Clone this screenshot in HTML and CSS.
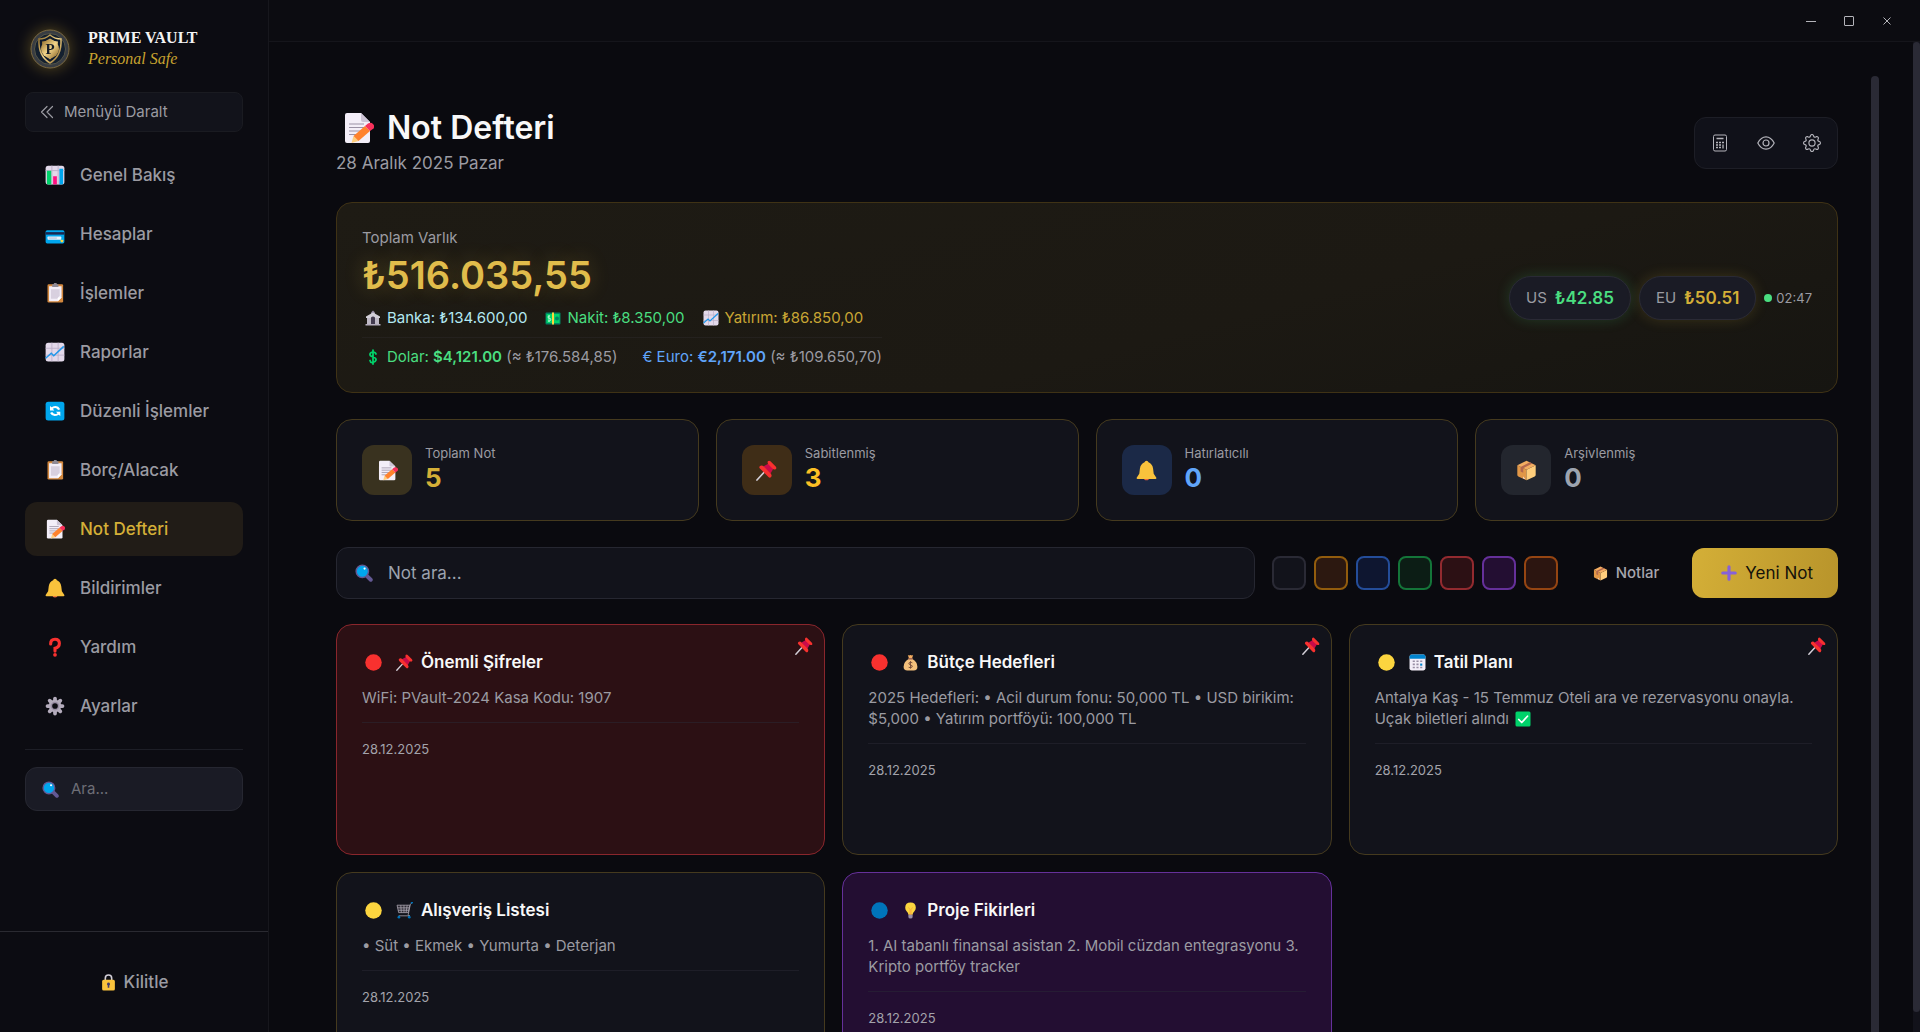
FILE: index.html
```html
<!DOCTYPE html>
<html lang="tr">
<head>
<meta charset="utf-8">
<meta name="viewport" content="width=device-width, initial-scale=1">
<title>Prime Vault – Not Defteri</title>
<link rel="stylesheet" href="styles.css">
</head>
<body>
<svg class="sprite" aria-hidden="true">
  <symbol id="i-bars" viewBox="0 0 32 32"><rect x="1" y="1" width="30" height="30" rx="4" fill="#e3d9ea"/><path d="M11 1v30M21 1v30M1 9h30" stroke="#c0b3cb" stroke-width="1.6"/><path d="M3 9h7v22H5a2 2 0 0 1-2-2z" fill="#00d26a"/><path d="M13 18h6v13h-6z" fill="#ff0f80"/><path d="M23 6h6v23a2 2 0 0 1-2 2h-4z" fill="#00a6ed"/></symbol>
  <symbol id="i-card" viewBox="0 0 32 32"><rect x="1" y="10" width="30" height="21" rx="2.5" fill="#00a6ed"/><path d="M1 13h30v4H1z" fill="#1b2750"/><rect x="4" y="20" width="22" height="5" rx="1" fill="#e8f2fb"/><path d="M6 22.500h13" stroke="#8a9cc0"/><rect x="25" y="25" width="4" height="4" rx="1" fill="#fcd53f"/></symbol>
  <symbol id="i-clip" viewBox="0 0 32 32"><rect x="4" y="2" width="25" height="29" rx="2" fill="#d3883e"/><path d="M6.500 5h20v18l-6 6h-14z" fill="#f3eef8"/><path d="M9.500 10h14v10l-4 5h-10z" fill="#d8d0df"/><path d="M20.500 29v-5q0-1 1-1h5z" fill="#fff"/><path d="M14 2a2.500 2.500 0 0 1 5 0h2.500v4.500h-10V2z" fill="#8f8a95"/></symbol>
  <symbol id="i-chart" viewBox="0 0 32 32"><rect x="1" y="1" width="30" height="30" rx="4" fill="#e3d9ea"/><path d="M11 1v30M21 1v30M1 10h30M1 21h30" stroke="#bdb0c9" stroke-width="1.400"/><path d="M1 26l9-8 4 4L30 7" fill="none" stroke="#1f97ea" stroke-width="2.400"/></symbol>
  <symbol id="i-sync" viewBox="0 0 32 32"><rect x="1" y="1" width="30" height="30" rx="4" fill="#00a6ed"/><path d="M8 8v7h7l-2.500-2.500q5-3.500 8.500 2l3.500-1.500Q20 5 10.500 10zM24.500 24v-7h-7l2.500 2.500q-5 3.500-8.500-2L8 19q4.500 8 14 3z" fill="#fff"/></symbol>
  <symbol id="i-memo" viewBox="0 0 32 32"><path d="M5 1h14l9 9v19a2 2 0 0 1-2 2H5a2 2 0 0 1-2-2V3a2 2 0 0 1 2-2z" fill="#f3eef8"/><path d="M19 1l9 9h-7a2 2 0 0 1-2-2z" fill="#cdc4d6"/><path d="M7 12h15M7 15.500h15M7 19h12M7 22.500h8" stroke="#9b92a6" stroke-width="1.200"/><path d="M9.500 31l2-7 5 5z" fill="#ffce7c"/><path d="M11.500 24L23 14l5 5-11.500 10z" fill="#ff822d"/><path d="M23 14l3-2.500q3-1.500 5 .5t.5 4.500L28 19z" fill="#f8315b"/></symbol>
  <symbol id="i-bell" viewBox="0 0 32 32"><path d="M12 27h8a4 4 0 0 1-8 0z" fill="#e8613c"/><path d="M16 1q2.500 0 3 2.500Q25 6 26 13l1 8 4 6q.5 2-1.500 2h-27Q.500 29 1 27l4-6 1-8Q7 6 13 3.500 13.500 1 16 1z" fill="#f9c23c"/></symbol>
  <symbol id="i-question" viewBox="0 0 32 32"><path d="M9 11q0-7.500 7-7.500t7 6.500-7 8v4.500" fill="none" stroke="#f8312f" stroke-width="5" stroke-linecap="round"/><circle cx="16" cy="28.500" r="3" fill="#f8312f"/></symbol>
  <symbol id="i-cog" viewBox="0 0 32 32"><g stroke="#b4acbc" stroke-width="6" stroke-linecap="round"><path d="M16 4v24M4 16h24M7.500 7.500l17 17M24.500 7.500l-17 17"/></g><circle cx="16" cy="16" r="10" fill="#b4acbc"/><circle cx="16" cy="16" r="7" fill="#998ea4"/><circle cx="16" cy="16" r="4.500" fill="#0c0c12"/></symbol>
  <symbol id="i-search" viewBox="0 0 32 32"><path d="M21 21l7 7" stroke="#635994" stroke-width="7" stroke-linecap="round"/><circle cx="13" cy="13" r="11" fill="#00a6ed" stroke="#635994" stroke-width="2.500"/><circle cx="17" cy="8" r="2" fill="#fff"/></symbol>
  <symbol id="i-lock" viewBox="0 0 32 32"><path d="M10 13V8q0-6 6-6t6 6v5" fill="none" stroke="#d3cfd8" stroke-width="3"/><rect x="4" y="11" width="24" height="20" rx="3" fill="#f9c23c"/><path d="M16 16a3 3 0 0 1 1.500 5.500V26h-3v-4.500A3 3 0 0 1 16 16z" fill="#433b6b"/></symbol>
  <symbol id="i-bank" viewBox="0 0 32 32"><path d="M16 1l4 4v4h-8V5z" fill="#998ea4"/><path d="M2 13L16 5l14 8v3H2z" fill="#d3cfd8"/><path d="M4 16h24v12H4z" fill="#9b93a3"/><path d="M12 15q4-4 8 0v13h-8z" fill="#433b4f"/><path d="M6 16v12M10 16v12M22 16v12M26 16v12" stroke="#e1dde6" stroke-width="2"/><path d="M1 28h30v3H1z" fill="#b4acbc"/></symbol>
  <symbol id="i-cash" viewBox="0 0 32 32"><rect x="1" y="5" width="30" height="24" rx="2" fill="#008463"/><rect x="3" y="8" width="26" height="18" fill="#00d26a"/><circle cx="24" cy="17" r="4" fill="#008463"/><path d="M14 5h4v24h-4z" fill="#fcd53f"/><path d="M10 12q-4-1-4 2t4 3 0 5H6M8 10v14" fill="none" stroke="#d5fbe5" stroke-width="1.500"/></symbol>
  <symbol id="i-dollar" viewBox="0 0 32 32"><path d="M22 10q-1-4-6-4t-6 4 6 6 6 6-6 5-6-4M16 2v28" fill="none" stroke="#00d26a" stroke-width="3.500" stroke-linecap="round"/></symbol>
  <symbol id="i-pin" viewBox="0 0 32 32"><path d="M1.500 30.500L12 19" stroke="#d3cfd8" stroke-width="2.600" stroke-linecap="round"/><path d="M11 10l9-5 7 7-5 9z" fill="#ca0b4a"/><path d="M6 9q3-2 6 1l10 10q3 3 1 6-2 2-4 0L6 13q-2-2 0-4zM18 2q2-2 4 0l8 8q2 2 0 4-3 1-5-1l-6-6q-2-2-1-5z" fill="#f8312f"/></symbol>
  <symbol id="i-box" viewBox="0 0 32 32"><path d="M2 8l14 7v16L3.500 25Q2 24 2 23z" fill="#e19747"/><path d="M30 8l-14 7v16l12.500-6q1.500-1 1.500-2z" fill="#ffce7c"/><path d="M2 8l14-7 14 7-14 7z" fill="#f3ad61"/><path d="M25 5.500L21 3.500l-14 7v7l4 2v-7z" fill="#b3684d"/><path d="M11 25l3 4-3-1z" fill="#f3eef8"/></symbol>
  <symbol id="i-plus" viewBox="0 0 32 32"><path d="M16 6v20M6 16h20" stroke="#8661d9" stroke-width="5" stroke-linecap="round"/></symbol>
  <symbol id="i-dot" viewBox="0 0 32 32"><circle cx="16" cy="16" r="15.500" fill="currentColor"/></symbol>
  <symbol id="i-bag" viewBox="0 0 32 32"><path d="M11 2q2 1.500 5 0 3 1.500 5 0l-2 6h-6z" fill="#f3ad61"/><path d="M13 9h6q10 6 10 15 0 7-7 7H10q-7 0-7-7 0-9 10-15z" fill="#f3c07b"/><path d="M12 7.500h8v3h-8z" fill="#a56953"/><path d="M19.500 16.500q-3.500-2.500-6 0t2.500 4 3 4-6.500.500M16 13.500v14" fill="none" stroke="#6d4534" stroke-width="1.600"/></symbol>
  <symbol id="i-calendar" viewBox="0 0 32 32"><rect x="1" y="1" width="30" height="30" rx="4" fill="#f3eef8"/><path d="M1 9V5a4 4 0 0 1 4-4h22a4 4 0 0 1 4 4v4z" fill="#0084ce"/><g fill="#998ea4"><path d="M7 12h4v3H7zM14 12h4v3h-4zM21 12h4v3h-4zM7 18h4v3H7zM14 18h4v3h-4zM7 24h4v3H7zM14 24h4v3h-4zM21 24h4v3h-4z"/></g><path d="M21 18h4v4h-4z" fill="#0084ce"/></symbol>
  <symbol id="i-check" viewBox="0 0 32 32"><rect x="1" y="1" width="30" height="30" rx="3" fill="#00d26a"/><path d="M7.500 17l6 6L25 10.500" fill="none" stroke="#fff" stroke-width="3.400" stroke-linecap="round" stroke-linejoin="round"/></symbol>
  <symbol id="i-cart" viewBox="0 0 32 32"><path d="M2 6h24l-3 14H5z" fill="#2d2a33"/><path d="M2 6h24l-3 14H5zM3 11h22M4 15.500h20M9 6l1 14M15 6v14M21 6l-2 14M30 2l-3 2-4 20q0 2 3 2H5" fill="none" stroke="#a9a4b0" stroke-width="1.500"/><path d="M28 2l4-1" stroke="#0074ba" stroke-width="3"/><circle cx="5.500" cy="28.500" r="2.500" fill="#0074ba"/><circle cx="25" cy="28.500" r="2.500" fill="#0074ba"/></symbol>
  <symbol id="i-bulb" viewBox="0 0 32 32"><path d="M16 1q10 0 10 10 0 4-3 7t-3 6h-8q0-3-3-6t-3-7Q6 1 16 1z" fill="#fcd53f"/><path d="M12 10l3 4v10h2V14l3-4" fill="none" stroke="#f9a03c" stroke-width="1.400"/><path d="M12 24h8v4q0 3-4 3t-4-3z" fill="#998ea4"/></symbol>
</svg>

<aside class="sidebar">
  <div class="brand">
    <svg class="brand-logo" viewBox="0 0 40 40" role="img" aria-label="Prime Vault">
      <defs><linearGradient id="gold" x1="0" y1="0" x2="1" y2="1"><stop offset="0" stop-color="#8d6a28"/><stop offset=".5" stop-color="#f3d58a"/><stop offset="1" stop-color="#8a6424"/></linearGradient></defs>
      <circle cx="20" cy="20" r="19" fill="#383c42" stroke="#7d6b43"/>
      <circle cx="20" cy="20" r="15.500" fill="#14202f" stroke="#575648"/>
      <path d="M20 6q5 4 11 4 1 17-11 24Q8 27 9 10q6 0 11-4z" fill="#101b2b" stroke="url(#gold)" stroke-width="1.500"/>
      <path d="M20 9.500q4 3 8 3 0 13-8 18-8-5-8-18 4 0 8-3z" fill="url(#gold)"/>
      <circle cx="20" cy="20" r="9" fill="url(#gold)"/>
      <text x="20" y="25" text-anchor="middle" class="logo-letter">P</text>
    </svg>
    <div>
      <div class="brand-name">PRIME VAULT</div>
      <div class="brand-sub">Personal Safe</div>
    </div>
  </div>

  <button class="collapse" type="button">
    <svg viewBox="0 0 14 14" fill="none" stroke="currentColor" stroke-width="1.200" stroke-linecap="round" stroke-linejoin="round"><path d="M7 1.500L1.500 7 7 12.500M12.500 1.500L7 7l5.500 5.500"/></svg>
    Menüyü Daralt
  </button>

  <nav class="nav">
    <a href="#"><svg><use href="#i-bars"/></svg>Genel Bakış</a>
    <a href="#"><svg><use href="#i-card"/></svg>Hesaplar</a>
    <a href="#"><svg><use href="#i-clip"/></svg>İşlemler</a>
    <a href="#"><svg><use href="#i-chart"/></svg>Raporlar</a>
    <a href="#"><svg><use href="#i-sync"/></svg>Düzenli İşlemler</a>
    <a href="#"><svg><use href="#i-clip"/></svg>Borç/Alacak</a>
    <a href="#" class="active" aria-current="page"><svg><use href="#i-memo"/></svg>Not Defteri</a>
    <a href="#"><svg><use href="#i-bell"/></svg>Bildirimler</a>
    <a href="#"><svg><use href="#i-question"/></svg>Yardım</a>
    <a href="#"><svg><use href="#i-cog"/></svg>Ayarlar</a>
  </nav>

  <div class="side-search-wrap">
    <label class="side-search">
      <svg aria-hidden="true"><use href="#i-search"/></svg>
      <input type="search" placeholder="Ara..." aria-label="Ara">
    </label>
  </div>

  <div class="side-footer">
    <button class="lock" type="button"><svg><use href="#i-lock"/></svg>Kilitle</button>
  </div>
</aside>

<div class="frame">
  <header class="titlebar">
    <button type="button" aria-label="Küçült"><svg viewBox="0 0 12 12"><path d="M1 6.500h10"/></svg></button>
    <button type="button" aria-label="Büyüt"><svg viewBox="0 0 12 12"><rect x="1.500" y="1.500" width="9" height="9" rx=".5"/></svg></button>
    <button type="button" aria-label="Kapat"><svg viewBox="0 0 12 12"><path d="M2.500 2.500l7 7M9.500 2.500l-7 7"/></svg></button>
  </header>

  <div class="outer">
    <div class="outer-view">
      <main class="page">
        <div class="page-head">
          <div>
            <h1><svg><use href="#i-memo"/></svg>Not Defteri</h1>
            <p class="date">28 Aralık 2025 Pazar</p>
          </div>
          <div class="tools">
            <button type="button" aria-label="Hesap makinesi"><svg viewBox="0 0 18 18" fill="none" stroke="currentColor"><rect x="2.500" y="1" width="13" height="16" rx="1.500"/><path d="M5.500 4.500h7" stroke-width="1.500"/><path d="M5 8.500h2M8 8.500h2M11 8.500h2M5 11h2M8 11h2M5 13.500h2M8 13.500h2M12 10.500v4" stroke-width="1.300"/></svg></button>
            <button type="button" aria-label="Gizle"><svg viewBox="0 0 18 18" fill="none" stroke="currentColor" stroke-width="1.200"><path d="M.8 9Q4 2.800 9 2.800T17.200 9Q14 15.200 9 15.200T.8 9z" stroke-linejoin="round"/><circle cx="9" cy="9" r="3"/></svg></button>
            <button type="button" aria-label="Ayarlar"><svg viewBox="0 0 16 16" fill="currentColor"><path d="M8 4.754a3.246 3.246 0 1 0 0 6.492 3.246 3.246 0 0 0 0-6.492zM5.754 8a2.246 2.246 0 1 1 4.492 0 2.246 2.246 0 0 1-4.492 0z"/><path d="M9.796 1.343c-.527-1.790-3.065-1.790-3.592 0l-.094.319a.873.873 0 0 1-1.255.52l-.292-.16c-1.640-.892-3.433.902-2.540 2.541l.159.292a.873.873 0 0 1-.52 1.255l-.319.094c-1.790.527-1.790 3.065 0 3.592l.319.094a.873.873 0 0 1 .52 1.255l-.16.292c-.892 1.640.901 3.434 2.541 2.540l.292-.159a.873.873 0 0 1 1.255.52l.094.319c.527 1.790 3.065 1.790 3.592 0l.094-.319a.873.873 0 0 1 1.255-.52l.292.16c1.640.893 3.434-.902 2.540-2.541l-.159-.292a.873.873 0 0 1 .52-1.255l.319-.094c1.790-.527 1.790-3.065 0-3.592l-.319-.094a.873.873 0 0 1-.52-1.255l.16-.292c.893-1.640-.902-3.433-2.541-2.540l-.292.159a.873.873 0 0 1-1.255-.52l-.094-.319zm-2.633.283c.246-.835 1.428-.835 1.674 0l.094.319a1.873 1.873 0 0 0 2.693 1.115l.291-.16c.764-.415 1.600.42 1.184 1.185l-.159.292a1.873 1.873 0 0 0 1.116 2.692l.318.094c.835.246.835 1.428 0 1.674l-.319.094a1.873 1.873 0 0 0-1.115 2.693l.16.291c.415.764-.42 1.600-1.185 1.184l-.291-.159a1.873 1.873 0 0 0-2.693 1.116l-.094.318c-.246.835-1.428.835-1.674 0l-.094-.319a1.873 1.873 0 0 0-2.692-1.115l-.292.16c-.764.415-1.600-.42-1.184-1.185l.159-.291A1.873 1.873 0 0 0 1.945 8.930l-.319-.094c-.835-.246-.835-1.428 0-1.674l.319-.094A1.873 1.873 0 0 0 3.060 4.377l-.16-.292c-.415-.764.42-1.600 1.185-1.184l.292.159a1.873 1.873 0 0 0 2.692-1.115l.094-.319z"/></svg></button>
          </div>
        </div>

        <section class="assets">
          <div class="assets-main">
            <div class="assets-label">Toplam Varlık</div>
            <div class="assets-total">₺516.035,55</div>
            <div class="assets-row">
              <span class="bank"><svg><use href="#i-bank"/></svg>Banka: ₺134.600,00</span>
              <span class="cash"><svg><use href="#i-cash"/></svg>Nakit: ₺8.350,00</span>
              <span class="invest"><svg><use href="#i-chart"/></svg>Yatırım: ₺86.850,00</span>
            </div>
            <div class="assets-row fx">
              <span class="usd"><svg><use href="#i-dollar"/></svg><span>Dolar: <b>$4,121.00</b> <small>(≈ ₺176.584,85)</small></span></span>
              <span class="eur"><span>€ Euro: <b>€2,171.00</b> <small>(≈ ₺109.650,70)</small></span></span>
            </div>
          </div>
          <div class="rates">
            <span class="rate rate-usd">US <b>₺42.85</b></span>
            <span class="rate rate-eur">EU <b>₺50.51</b></span>
            <span class="rate-time">02:47</span>
          </div>
        </section>

        <section class="stats">
          <div class="stat gold"><span class="stat-icon"><svg><use href="#i-memo"/></svg></span><div><div class="stat-label">Toplam Not</div><div class="stat-value">5</div></div></div>
          <div class="stat amber"><span class="stat-icon"><svg><use href="#i-pin"/></svg></span><div><div class="stat-label">Sabitlenmiş</div><div class="stat-value">3</div></div></div>
          <div class="stat blue"><span class="stat-icon"><svg><use href="#i-bell"/></svg></span><div><div class="stat-label">Hatırlatıcılı</div><div class="stat-value">0</div></div></div>
          <div class="stat gray"><span class="stat-icon"><svg><use href="#i-box"/></svg></span><div><div class="stat-label">Arşivlenmiş</div><div class="stat-value">0</div></div></div>
        </section>

        <div class="filters">
          <label class="note-search">
            <svg aria-hidden="true"><use href="#i-search"/></svg>
            <input type="search" placeholder="Not ara..." aria-label="Not ara">
          </label>
          <div class="swatches">
            <button type="button" class="sw sw-none" aria-label="Renksiz"></button>
            <button type="button" class="sw sw-yellow" aria-label="Sarı"></button>
            <button type="button" class="sw sw-blue" aria-label="Mavi"></button>
            <button type="button" class="sw sw-green" aria-label="Yeşil"></button>
            <button type="button" class="sw sw-red" aria-label="Kırmızı"></button>
            <button type="button" class="sw sw-purple" aria-label="Mor"></button>
            <button type="button" class="sw sw-orange" aria-label="Turuncu"></button>
          </div>
          <button type="button" class="archive"><svg><use href="#i-box"/></svg>Notlar</button>
          <button type="button" class="new-note"><svg><use href="#i-plus"/></svg>Yeni Not</button>
        </div>

        <section class="notes">
          <article class="note note-red">
            <svg class="note-pin"><use href="#i-pin"/></svg>
            <h2><svg class="prio high"><use href="#i-dot"/></svg><svg><use href="#i-pin"/></svg>Önemli Şifreler</h2>
            <p>WiFi: PVault-2024 Kasa Kodu: 1907</p>
            <time>28.12.2025</time>
          </article>
          <article class="note">
            <svg class="note-pin"><use href="#i-pin"/></svg>
            <h2><svg class="prio high"><use href="#i-dot"/></svg><svg><use href="#i-bag"/></svg>Bütçe Hedefleri</h2>
            <p>2025 Hedefleri: • Acil durum fonu: 50,000 TL • USD birikim: $5,000 • Yatırım portföyü: 100,000 TL</p>
            <time>28.12.2025</time>
          </article>
          <article class="note">
            <svg class="note-pin"><use href="#i-pin"/></svg>
            <h2><svg class="prio mid"><use href="#i-dot"/></svg><svg><use href="#i-calendar"/></svg>Tatil Planı</h2>
            <p>Antalya Kaş - 15 Temmuz Oteli ara ve rezervasyonu onayla. Uçak biletleri alındı <svg class="inline-icon"><use href="#i-check"/></svg></p>
            <time>28.12.2025</time>
          </article>
          <article class="note">
            <h2><svg class="prio mid"><use href="#i-dot"/></svg><svg><use href="#i-cart"/></svg>Alışveriş Listesi</h2>
            <p>• Süt • Ekmek • Yumurta • Deterjan</p>
            <time>28.12.2025</time>
          </article>
          <article class="note note-purple">
            <h2><svg class="prio low"><use href="#i-dot"/></svg><svg><use href="#i-bulb"/></svg>Proje Fikirleri</h2>
            <p>1. AI tabanlı finansal asistan 2. Mobil cüzdan entegrasyonu 3. Kripto portföy tracker</p>
            <time>28.12.2025</time>
          </article>
        </section>
      </main>
      <div class="bar bar-inner"></div>
    </div>
    <div class="bar bar-outer"><div class="thumb"></div></div>
  </div>
</div>
</body>
</html>
```
FILE: styles.css
```css
:root {
  --bg: #0a0a0f;
  --panel: #12131b;
  --side: #0c0c12;
  --raised: #1a1b25;
  --line: #1d1e26;
  --gold: #d4af37;
  --gold-line: #453a1e;
  --muted: #9b9ba2;
  --text: #f8f8f8;
  --radius: 16px;
}

* { box-sizing: border-box; }

body {
  margin: 0;
  display: flex;
  height: 100vh;
  overflow: hidden;
  background: var(--bg);
  color: var(--text);
  font: 16px/20px Inter, "Noto Sans", sans-serif;
}

button, input { font: inherit; color: inherit; }
button { border: 0; background: none; padding: 0; cursor: pointer; }
h1, h2, p { margin: 0; }
svg { display: block; flex: none; }
.sprite { position: absolute; width: 0; height: 0; }

/* Sidebar */
.sidebar {
  flex: none;
  width: 269px;
  display: flex;
  flex-direction: column;
  background: var(--side);
  border-right: 1px solid #17171d;
  color: var(--muted);
}

.brand {
  display: flex;
  align-items: center;
  gap: 18px;
  padding: 28px 25px 22px 30px;
}
.brand-logo {
  width: 40px;
  height: 42px;
  border-radius: 50%;
  filter: drop-shadow(0 0 8px rgba(212, 175, 55, .4));
}
.logo-letter { font: bold 15px "Liberation Serif", serif; fill: #141c28; }
.brand-name {
  font: bold 16px/20px "Liberation Serif", serif;
  color: #f4f4f4;
}
.brand-sub {
  font: italic 16px/22px "Liberation Serif", serif;
  color: #c7a22f;
}

.collapse {
  display: flex;
  align-items: center;
  gap: 10px;
  height: 40px;
  margin: 0 25px 16px;
  padding: 0 14px;
  border: 1px solid #1a1b21;
  border-radius: 8px;
  background: var(--panel);
  font-size: 15px;
}
.collapse svg { width: 14px; height: 14px; }

.nav {
  display: flex;
  flex-direction: column;
  gap: 5px;
  margin: 0 25px;
  padding-bottom: 16px;
  border-bottom: 1px solid var(--line);
}
.nav a {
  display: flex;
  align-items: center;
  gap: 15px;
  height: 54px;
  padding: 0 20px;
  border-radius: 12px;
  color: var(--muted);
  font-size: 17px;
  font-weight: 500;
  text-decoration: none;
}
.nav svg { width: 20px; height: 20px; }
.nav .active { background: #211c17; color: var(--gold); }

.side-search-wrap { padding: 17px 25px; }
.side-search {
  display: flex;
  align-items: center;
  gap: 12px;
  height: 44px;
  padding: 0 16px;
  border: 1px solid #262731;
  border-radius: 12px;
  background: var(--raised);
  font-size: 15px;
}
.side-search svg { width: 17px; height: 17px; }

input {
  flex: 1;
  min-width: 0;
  padding: 0;
  border: 0;
  outline: 0;
  background: none;
}
.side-search input::placeholder { color: #6d6e76; opacity: 1; }

.side-footer {
  margin-top: auto;
  padding: 40px 25px;
  border-top: 1px solid #2a2a31;
}
.lock {
  display: flex;
  align-items: center;
  justify-content: center;
  gap: 7px;
  width: 100%;
  font-size: 17px;
  font-weight: 500;
}
.lock svg { width: 17px; height: 17px; }

/* Window frame */
.frame {
  flex: 1;
  min-width: 0;
  display: flex;
  flex-direction: column;
}
.titlebar {
  flex: none;
  display: flex;
  justify-content: flex-end;
  align-items: center;
  height: 42px;
  padding-right: 14px;
  background: #0c0c11;
  border-bottom: 1px solid #15151b;
}
.titlebar button {
  display: grid;
  place-items: center;
  width: 38px;
  height: 40px;
}
.titlebar svg {
  width: 12px;
  height: 12px;
  fill: none;
  stroke: #b4b4ba;
}

.outer { flex: 1; min-height: 0; display: flex; }
.outer-view {
  flex: 1;
  min-width: 0;
  display: flex;
  padding: 34px 34px 0;
}
.bar { flex: none; background: #2a2a35; }
.bar-inner { width: 8px; border-radius: 4px 4px 0 0; }
.bar-outer { width: 7px; padding-bottom: 20px; background: #12121a; }
.thumb { height: 100%; border-radius: 4px; background: #2a2a35; }

.page {
  flex: 1;
  min-width: 0;
  overflow: hidden;
  padding: 34px 33px 0;
}

/* Page head */
.page-head {
  display: flex;
  align-items: center;
  justify-content: space-between;
  margin-bottom: 27px;
}
h1 {
  display: flex;
  align-items: center;
  gap: 13px;
  padding-left: 6px;
  font-size: 32px;
  line-height: 36px;
  font-weight: 600;
}
h1 svg { width: 32px; height: 32px; }
.date {
  margin-top: 5px;
  font-size: 17px;
  line-height: 24px;
  color: var(--muted);
}
.tools {
  display: flex;
  gap: 4px;
  padding: 4px;
  border: 1px solid var(--line);
  border-radius: 12px;
  background: #101119;
}
.tools button {
  display: grid;
  place-items: center;
  width: 42px;
  height: 42px;
  color: #b4b4bb;
}
.tools svg { width: 18px; height: 18px; }

/* Asset summary */
.assets {
  display: flex;
  align-items: center;
  justify-content: space-between;
  margin-bottom: 26px;
  padding: 25px;
  border: 1px solid #3f3215;
  border-radius: var(--radius);
  background: linear-gradient(165deg, #1e1b14, #1c1913 60%, #161511);
}
.assets-label { font-size: 15px; color: var(--muted); }
.assets-total {
  margin-top: 4px;
  font-size: 38px;
  line-height: 46px;
  font-weight: 600;
  color: #e0bc4b;
  text-shadow: 0 0 20px rgba(212, 175, 55, .3);
}
.assets-row {
  display: flex;
  gap: 15px;
  margin-top: 10px;
  font-size: 15px;
}
.assets-row > span { display: flex; align-items: center; gap: 6px; }
.assets-row svg { width: 16px; height: 16px; margin-left: 3px; }
.assets-row.fx {
  gap: 25px;
  margin-top: 9px;
  padding-top: 9px;
  border-top: 1px solid #24211e;
}
.assets-row b { font-weight: 600; }
.assets-row small { font-size: 15px; color: var(--muted); }
.bank { color: #b3e8f2; }
.cash, .usd { color: #4ade80; }
.invest { color: #c9a634; }
.eur { color: #60a5fa; }

.rates { display: flex; align-items: center; gap: 8px; }
.rate {
  display: flex;
  align-items: center;
  gap: 8px;
  height: 44px;
  padding: 0 16px;
  border: 1px solid #2a2a35;
  border-radius: 22px;
  background: var(--raised);
  font-size: 15px;
  color: var(--muted);
}
.rate b { font-size: 17px; font-weight: 600; }
.rate-usd { box-shadow: 0 0 14px rgba(74, 222, 128, .18); }
.rate-usd b { color: #4ade80; }
.rate-eur { box-shadow: 0 0 14px rgba(212, 175, 55, .18); }
.rate-eur b { color: var(--gold); }
.rate-time {
  display: flex;
  align-items: center;
  gap: 4px;
  font-size: 13px;
  color: var(--muted);
}
.rate-time::before {
  content: "";
  width: 8px;
  height: 8px;
  border-radius: 50%;
  background: #4ade80;
}

/* Stats */
.stats {
  display: grid;
  grid-template-columns: repeat(4, 1fr);
  gap: 17px;
  margin-bottom: 26px;
}
.stat {
  display: flex;
  align-items: center;
  gap: 13px;
  padding: 25px;
  border: 1px solid var(--gold-line);
  border-radius: var(--radius);
  background: var(--panel);
}
.stat-icon {
  display: grid;
  place-items: center;
  width: 50px;
  height: 50px;
  border-radius: 12px;
}
.stat-icon svg { width: 21px; height: 21px; }
.stat-label { font-size: 13px; line-height: 16px; color: var(--muted); }
.stat-value { font-size: 26px; line-height: 34px; font-weight: 700; }
.gold .stat-icon { background: #39321f; }
.gold .stat-value { color: var(--gold); }
.amber .stat-icon { background: #3f2d17; }
.amber .stat-value { color: #fbbf24; }
.blue .stat-icon { background: #1b2947; }
.blue .stat-value { color: #60a5fa; }
.gray .stat-icon { background: #23262e; }
.gray .stat-value { color: #9ca3af; }

/* Filters */
.filters {
  display: flex;
  align-items: center;
  gap: 17px;
  margin-bottom: 25px;
}
.note-search {
  flex: 1;
  display: flex;
  align-items: center;
  gap: 15px;
  height: 52px;
  padding: 0 18px;
  border: 1px solid #262731;
  border-radius: 12px;
  background: var(--panel);
  font-size: 17px;
}
.note-search svg { width: 18px; height: 18px; }
.note-search input::placeholder { color: #9ca3af; opacity: 1; }
.swatches { display: flex; gap: 8px; }
.sw {
  width: 34px;
  height: 34px;
  border: 2px solid;
  border-radius: 8px;
}
.sw-none { background: #12131b; border-color: #2a2a35; }
.sw-yellow { background: #2c1810; border-color: #925c0d; }
.sw-blue { background: #0e1630; border-color: #244d99; }
.sw-green { background: #0c1d15; border-color: #147539; }
.sw-red { background: #2c1014; border-color: #922a2f; }
.sw-purple { background: #230e32; border-color: #65309a; }
.sw-orange { background: #2c1510; border-color: #954512; }
.archive {
  display: flex;
  align-items: center;
  gap: 8px;
  height: 50px;
  padding: 0 16px 0 18px;
  font-size: 15px;
  font-weight: 500;
  color: #a6a6ad;
}
.archive svg { width: 15px; height: 15px; }
.new-note {
  display: flex;
  align-items: center;
  gap: 6px;
  height: 50px;
  padding: 0 25px 0 27px;
  border-radius: 12px;
  background: linear-gradient(100deg, #d4af37, #b8942b);
  font-size: 17px;
  color: #14120a;
}
.new-note svg { width: 20px; height: 20px; }

/* Notes */
.notes {
  display: grid;
  grid-template-columns: repeat(3, 1fr);
  grid-auto-rows: minmax(231px, auto);
  gap: 17px;
}
.note {
  position: relative;
  padding: 25px;
  border: 1px solid var(--gold-line);
  border-radius: var(--radius);
  background: var(--panel);
}
.note-red { background: #2c1014; border-color: #8a262c; }
.note-purple { background: #230e32; border-color: #65309a; }
.note-pin {
  position: absolute;
  top: 12px;
  right: 11px;
  width: 18px;
  height: 18px;
}
.note h2 {
  display: flex;
  align-items: center;
  gap: 8px;
  font-size: 17px;
  line-height: 24px;
  font-weight: 600;
}
.note h2 svg { width: 17px; height: 17px; }
.note h2 .prio { margin: 0 6px 0 3px; }
.high { color: #f8312f; }
.mid { color: #fcd53f; }
.low { color: #0074ba; }
.note p {
  margin: 13px 0 14px;
  font-size: 15px;
  line-height: 21px;
  color: var(--muted);
}
.inline-icon {
  display: inline-block;
  width: 16px;
  height: 16px;
  margin-left: 2px;
  vertical-align: -3px;
}
.note time {
  display: block;
  padding-top: 17px;
  border-top: 1px solid rgba(42, 42, 53, .5);
  font-size: 13px;
  line-height: 18px;
  color: #a3a3ab;
}
```
